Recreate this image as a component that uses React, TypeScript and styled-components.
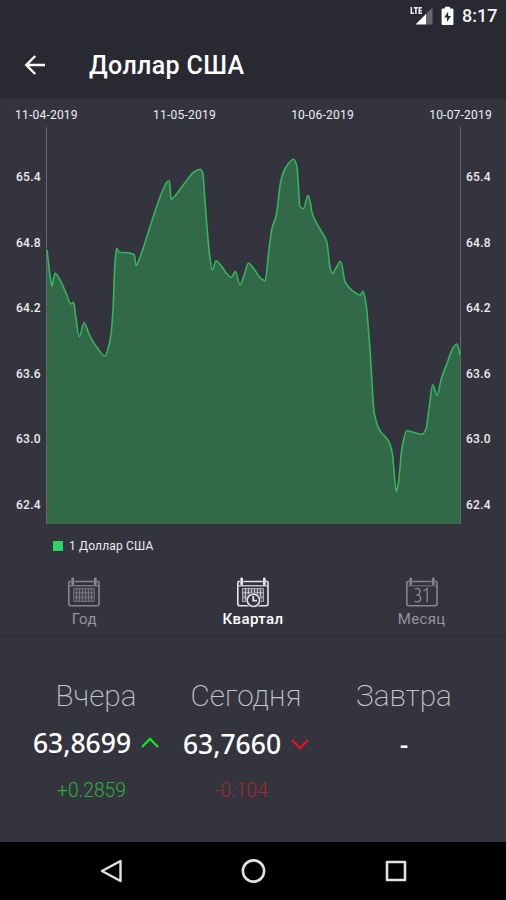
import React from "react";
import styled, { createGlobalStyle } from "styled-components";

const GlobalStyle = createGlobalStyle`
  * { box-sizing: border-box; }
  body { margin: 0; background: #33333e; }
`;

const Screen = styled.div`
  display: flex;
  flex-direction: column;
  width: 506px;
  height: 900px;
  overflow: hidden;
  background: #34343f;
  color: #fff;
  font-family: Roboto, "Noto Sans", sans-serif;
`;

const StatusBar = styled.div`
  display: flex;
  align-items: center;
  justify-content: flex-end;
  height: 32px;
  padding-right: 9px;
  background: #292932;
`;

const SignalIcon = styled.svg`
  width: 24px;
  height: 20px;
  margin-right: 8px;
`;

const BatteryIcon = styled.svg`
  width: 13px;
  height: 20px;
  margin-right: 8px;
`;

const Clock = styled.span`
  font-size: 18px;
  font-weight: 500;
  line-height: 20px;
  width: 35px;
  white-space: nowrap;
  color: #f4f4f6;
`;

const AppBar = styled.header`
  display: flex;
  align-items: center;
  height: 67px;
  padding-left: 24px;
  background: #292932;
`;

const BackIcon = styled.svg`
  width: 22px;
  height: 22px;
  margin-right: 43px;
`;

const Title = styled.h1`
  margin: 0;
  font-size: 25px;
  font-weight: 500;
  line-height: 32px;
  letter-spacing: 0.35px;
`;

const ChartSection = styled.section`
  height: 467px;
  padding-top: 8px;
`;

const DateAxis = styled.div`
  display: flex;
  justify-content: space-between;
  height: 20px;
  padding: 0 14px 0 15px;
  font-size: 12px;
  line-height: 16px;
  letter-spacing: 0.22px;
  color: #f0f0f3;
`;

const PlotRow = styled.div`
  display: grid;
  grid-template-columns: 46px 415px 45px;
  height: 398px;
`;

const ValueAxis = styled.div<{ $side: "left" | "right" }>`
  display: flex;
  flex-direction: column;
  padding-top: 42px;
  padding-left: ${(p) => (p.$side === "left" ? 16 : 5)}px;
  font-size: 12px;
  font-weight: 500;
  letter-spacing: 0.3px;
  color: #ececf0;
`;

const Tick = styled.span`
  height: 65.5px;
  line-height: 16px;
`;

const Legend = styled.div`
  display: flex;
  align-items: center;
  height: 42px;
  padding-left: 53px;
  font-size: 12px;
  letter-spacing: 0.15px;
  color: #ececf0;
`;

const Swatch = styled.span`
  width: 10px;
  height: 10px;
  margin-right: 6px;
  background: #2fd364;
`;

const Periods = styled.nav`
  display: grid;
  grid-template-columns: repeat(3, 1fr);
  height: 71px;
  border-bottom: 1px solid #2d2d37;
`;

const Period = styled.button<{ $active?: boolean }>`
  display: flex;
  flex-direction: column;
  align-items: center;
  padding: 10px 0 0;
  border: 0;
  background: none;
  font: ${(p) => (p.$active ? 500 : 400)} 15px / 18px Roboto, sans-serif;
  letter-spacing: 0.4px;
  color: ${(p) => (p.$active ? "#fff" : "#94949c")};
`;

const CalendarSvg = styled.svg`
  width: 34px;
  height: 34px;
`;

const Summary = styled.section`
  display: grid;
  grid-template-columns: 192px 108px 208px;
  flex: 1;
  padding-top: 41px;
`;

const Day = styled.div`
  display: flex;
  flex-direction: column;
  align-items: center;
  white-space: nowrap;
`;

const DayName = styled.div`
  font-size: 29.7px;
  font-weight: 200;
  line-height: 36px;
  color: #c6c6cd;
`;

const Rate = styled.div<{ $offset?: number }>`
  display: flex;
  align-items: center;
  height: 36px;
  margin-top: ${(p) => 11 + (p.$offset ?? 0)}px;
  margin-bottom: ${(p) => 18 - (p.$offset ?? 0)}px;
  font-family: "Noto Sans", sans-serif;
  font-size: 26.5px;
  font-weight: 500;
`;

const Arrow = styled.svg`
  width: 18px;
  height: 12px;
  margin-left: 10px;
`;

const Delta = styled.div<{ $up: boolean }>`
  margin-right: 9px;
  font-size: 19.3px;
  font-weight: 300;
  line-height: 24px;
  color: ${(p) => (p.$up ? "#2fae3a" : "#a32b34")};
`;

const SystemNav = styled.footer`
  display: flex;
  align-items: center;
  justify-content: space-between;
  height: 58px;
  padding: 0 97px 0 99px;
  background: #000;
`;

const NavIcon = styled.svg`
  width: 26px;
  height: 26px;
`;

const points: [number, number][] = [
  [47, 250], [50.5, 279], [52, 286.5], [53.5, 278], [55.3, 273.3], [60, 280], [66, 293], [71, 304],
  [73.7, 302.3], [75.5, 315], [79.3, 336.7], [84, 322.7], [89, 334], [97, 347.5], [105, 356],
  [109, 345], [111, 334], [113, 310], [115, 262], [116.7, 248.3], [119, 252.3], [128, 252.8],
  [134.3, 254.8], [136, 265.5], [139.5, 258.5], [152, 220.5], [162, 192], [167, 182.3],
  [169.5, 180.7], [171, 199.3], [174.5, 196.5], [185, 182.7], [194, 172], [200, 169.3], [202.7, 173],
  [205.5, 208], [209.5, 254], [212.3, 270], [216, 260.7], [221, 265.5], [227, 274], [231.5, 277.3],
  [235.3, 271.5], [240, 284.7], [244.5, 274], [248.3, 263.3], [254, 269], [260, 277.5], [265.2, 280.7],
  [268.5, 254], [272, 228.3], [276.3, 215], [280.7, 181.7], [286, 167], [293.5, 159.2], [297, 166.7],
  [298.5, 188], [300, 206.5], [303.3, 208.7], [308.3, 195.3], [312.7, 215], [320, 229], [326.7, 241.7],
  [330, 267], [332.3, 273.7], [336, 268], [340.7, 261.3], [345, 281.7], [352, 290.5], [360.3, 295],
  [363, 291.3], [366, 304], [370, 350], [374.3, 413.3], [380, 430.7], [388.3, 440.7], [392.3, 453.3],
  [395, 482], [396.3, 491.7], [398.5, 482], [402, 448], [406.7, 430.7], [414, 432.5], [422, 434.3],
  [426, 429], [429, 409], [432.7, 384.7], [437.3, 395.3], [441, 380], [447.5, 362], [453, 348],
  [457, 344], [460, 355],
];

/** Builds a monotone cubic curve through the quotes. */
function smooth(pts: [number, number][]): string {
  const slope = (i: number) => (pts[i + 1][1] - pts[i][1]) / (pts[i + 1][0] - pts[i][0]);
  const tangent = pts.map((_, i) => {
    if (i === 0) return slope(0);
    if (i === pts.length - 1) return slope(i - 1);
    const a = slope(i - 1);
    const b = slope(i);
    return a * b <= 0 ? 0 : (2 * a * b) / (a + b);
  });
  return pts.slice(1).reduce((d, [x, y], i) => {
    const [px, py] = pts[i];
    const h = (x - px) / 3;
    return `${d} C${px + h} ${py + tangent[i] * h} ${x - h} ${y - tangent[i + 1] * h} ${x} ${y}`;
  }, `M${pts[0][0]} ${pts[0][1]}`);
}

const curve = smooth(points);
const dates = ["11-04-2019", "11-05-2019", "10-06-2019", "10-07-2019"];
const values = ["65.4", "64.8", "64.2", "63.6", "63.0", "62.4"];

const Plot = () => (
  <svg width="415" height="398" viewBox="46 127 415 398">
    <path d={`${curve} V524 H47 Z`} fill="#326948" />
    <path d="M46.5 127V524.5M460.5 127V524.5" stroke="#777780" strokeWidth="1" opacity="0.75" />
    <path d={curve} fill="none" stroke="#35b55c" strokeWidth="1.6" strokeLinejoin="round" />
  </svg>
);

type Kind = "year" | "quarter" | "month";

const Calendar = ({ kind }: { kind: Kind }) => {
  const color = kind === "quarter" ? "#e4e4e8" : "#85858e";
  return (
    <CalendarSvg viewBox="0 0 34 34" fill="none" stroke={color}>
      <path d="M4 5.5H2.8Q1.8 5.5 1.8 6.8V27.8Q1.8 29.7 3.6 29.7H30.2Q32 29.7 32 27.8V6.8Q32 5.5 31 5.5H30M7.5 5.5H26.5" strokeWidth="1.6" />
      <path d="M2.5 9.8H31.5" strokeWidth="1.2" opacity={kind === "month" ? 0.65 : 1} />
      <path d="M5.7 3V8M28.3 3V8" strokeWidth="2.8" strokeLinecap="round" />
      {kind === "month" ? (
        <path
          d="M10 13.3Q12 11.8 14 13Q16.3 15.5 14 18Q13.2 19 11.5 19Q14 18.8 15.1 20.3Q16.8 23.8 14 25.5Q11.5 26.5 9.2 25M18.5 15L22.2 12.5V26.2"
          strokeWidth="1.4"
        />
      ) : (
        <>
          <path d="M6.5 12.5H27.5V25.5H6.5Z" fill={color} fillOpacity="0.3" strokeWidth="0.8" opacity="0.8" />
          <path d="M9.5 12.5V25.5M12.5 12.5V25.5M15.5 12.5V25.5M18.5 12.5V25.5M21.5 12.5V25.5M24.5 12.5V25.5M6.5 16.8H27.5M6.5 21.2H27.5" strokeWidth="0.9" opacity="0.8" />
        </>
      )}
      {kind === "quarter" && (
        <>
          <circle cx="17.4" cy="24.3" r="7.8" fill="#34343f" stroke="none" />
          <circle cx="17.4" cy="24.3" r="6.2" strokeWidth="1.6" />
          <path d="M17.2 20V24.6H21" strokeWidth="1.7" />
        </>
      )}
    </CalendarSvg>
  );
};

const ValueLabels = ({ side }: { side: "left" | "right" }) => (
  <ValueAxis $side={side}>
    {values.map((v) => (
      <Tick key={v}>{v}</Tick>
    ))}
  </ValueAxis>
);

export default function App() {
  return (
    <Screen>
      <GlobalStyle />
      <StatusBar>
        <SignalIcon viewBox="0 0 24 20">
          <path d="M6.5 18.5L17 8V18.5Z" fill="#fff" />
          <path d="M17 8L23.5 1.5V18.5H17Z" fill="#66666e" />
          <path d="M2.3 1V7.3H5M4.8 1.8H9M6.9 1.8V8M13 1.8H10.3V7.3H13M10.3 4.6H12.7" fill="none" stroke="#e8e8ec" strokeWidth="1.6" />
        </SignalIcon>
        <BatteryIcon viewBox="0 0 13 20">
          <path d="M4 .8H9V2.6H11.3Q12.4 2.6 12.4 3.7V17.9Q12.4 19 11.3 19H1.7Q.6 19 .6 17.9V3.7Q.6 2.6 1.7 2.6H4Z" fill="#fff" />
          <path d="M7.2 5.5L3.2 11.5H6V16L10 10H7.2Z" fill="#292932" />
        </BatteryIcon>
        <Clock>8:17</Clock>
      </StatusBar>
      <AppBar>
        <BackIcon viewBox="0 0 22 22" fill="none" stroke="#fff" strokeWidth="2.4">
          <path d="M21 10H3M11.2 1L2.3 10L11.2 19" />
        </BackIcon>
        <Title>Доллар США</Title>
      </AppBar>
      <ChartSection>
        <DateAxis>
          {dates.map((d) => (
            <span key={d}>{d}</span>
          ))}
        </DateAxis>
        <PlotRow>
          <ValueLabels side="left" />
          <Plot />
          <ValueLabels side="right" />
        </PlotRow>
        <Legend>
          <Swatch />1 Доллар США
        </Legend>
      </ChartSection>
      <Periods>
        <Period><Calendar kind="year" />Год</Period>
        <Period $active><Calendar kind="quarter" />Квартал</Period>
        <Period><Calendar kind="month" />Месяц</Period>
      </Periods>
      <Summary>
        <Day>
          <DayName>Вчера</DayName>
          <Rate>
            63,8699
            <Arrow viewBox="0 0 18 12" fill="none" stroke="#10e620" strokeWidth="2.3"><path d="M1 10L9 2L17 10" /></Arrow>
          </Rate>
          <Delta $up>+0.2859</Delta>
        </Day>
        <Day>
          <DayName>Сегодня</DayName>
          <Rate $offset={1}>
            63,7660
            <Arrow viewBox="0 0 18 12" fill="none" stroke="#e01420" strokeWidth="2.3"><path d="M1 2L9 10L17 2" /></Arrow>
          </Rate>
          <Delta $up={false}>-0.104</Delta>
        </Day>
        <Day>
          <DayName>Завтра</DayName>
          <Rate $offset={1}>-</Rate>
        </Day>
      </Summary>
      <SystemNav>
        <NavIcon viewBox="0 0 26 26" fill="none" stroke="#e2e2e2" strokeWidth="2.4" strokeLinejoin="round"><path d="M21.5 3V23L3 13Z" /></NavIcon>
        <NavIcon viewBox="0 0 26 26" fill="none" stroke="#e2e2e2" strokeWidth="2.6"><circle cx="12.5" cy="13" r="10.6" /></NavIcon>
        <NavIcon viewBox="0 0 26 26" fill="none" stroke="#e2e2e2" strokeWidth="2.6" strokeLinejoin="round"><path d="M4 4H22V22H4Z" /></NavIcon>
      </SystemNav>
    </Screen>
  );
}
